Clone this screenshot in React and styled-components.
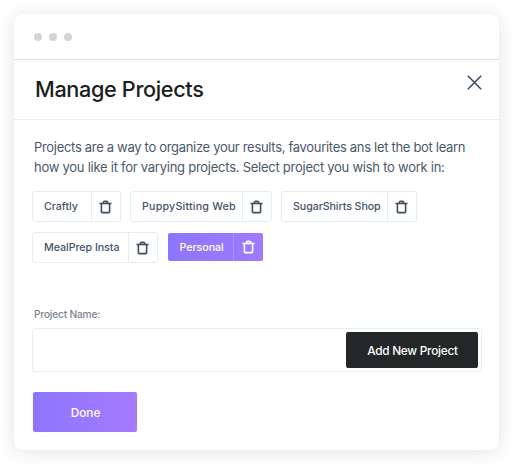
import React from "react";
import styled, { createGlobalStyle } from "styled-components";

const GlobalStyle = createGlobalStyle`
  *, *::before, *::after { box-sizing: border-box; }
  body {
    margin: 0;
    background: #fff;
    font-family: Inter, "Liberation Sans", sans-serif;
    overflow: hidden;
  }
  h1, p { margin: 0; }
  button { font: inherit; border: 0; padding: 0; margin: 0; background: none; }
`;

const Window = styled.main`
  width: 485px;
  height: 436px;
  margin: 14px;
  border-radius: 9px;
  background: #fff;
  box-shadow: 0 2px 19px rgba(0, 0, 0, 0.11);
`;

const TitleBar = styled.div`
  display: flex;
  align-items: center;
  gap: 7px;
  height: 46px;
  padding-left: 20px;
  border-bottom: 1px solid #dfdfe9;
`;

const Dot = styled.span`
  width: 8px;
  height: 8px;
  border-radius: 50%;
  background: #d4d4d4;
`;

const Header = styled.header`
  display: flex;
  justify-content: space-between;
  height: 60px;
  padding: 15px 17px 0 21px;
  border-bottom: 1px solid #e2eeee;
`;

const Title = styled.h1`
  font-size: 21.7px;
  line-height: 28px;
  font-weight: 500;
  letter-spacing: ${(p) => p.$track}px;
  color: #1b1e20;
  white-space: nowrap;
`;

const CloseButton = styled.button`
  width: 15px;
  height: 15px;
  display: flex;
`;

const Body = styled.section`
  padding: 17px 17px 0 18px;
`;

const Intro = styled.p`
  padding-left: 2px;
  font-size: 13px;
  line-height: 20px;
  color: #4b586a;
  white-space: nowrap;
`;

const Line = styled.span`
  display: block;
  letter-spacing: ${(p) => p.$track}px;
`;

const ChipList = styled.div`
  display: flex;
  flex-wrap: wrap;
  align-items: flex-start;
  gap: 10px 9px;
  margin-top: 14px;
`;

const Chip = styled.div`
  display: flex;
  width: ${(p) => p.$width}px;
  height: 31px;
  border: 1px solid #e2eef4;
  border-radius: 3px;
  color: #46536a;

  ${(p) =>
    p.$active &&
    `
    height: 28px;
    margin: 1px 0 0 1px;
    border: 0;
    border-radius: 2px;
    color: #fff;
    background: linear-gradient(90deg, #8c76fd, #a079fe);
  `}
`;

const ChipLabel = styled.span`
  flex: 1;
  padding-left: ${(p) => (p.$active ? 11.5 : 11)}px;
  font-size: 10.7px;
  line-height: ${(p) => (p.$active ? 29 : 30)}px;
  font-weight: 500;
  letter-spacing: ${(p) => p.$track}px;
  white-space: nowrap;
`;

const ChipDelete = styled.button`
  display: flex;
  align-items: center;
  justify-content: center;
  width: ${(p) => (p.$active ? 30 : 29)}px;
  padding-right: 1px;
  border-left: 1px solid ${(p) => (p.$active ? "#ad91fe" : "#e2eef4")};
  color: ${(p) => (p.$active ? "#fff" : "#414e60")};
`;

const FieldLabel = styled.label`
  display: block;
  margin: 43px 0 0 2px;
  font-size: 10.2px;
  line-height: 16px;
  font-weight: 500;
  letter-spacing: ${(p) => p.$track}px;
  color: #7b8592;
`;

const Field = styled.div`
  display: flex;
  height: 44px;
  width: 450px;
  margin-top: 6px;
  padding: 3px 3px 3px 0;
  border: 1px solid #e2eff7;
  border-radius: 3px;
`;

const Input = styled.input`
  flex: 1;
  min-width: 0;
  padding: 0 12px;
  border: 0;
  outline: 0;
  background: transparent;
  font: inherit;
`;

const Button = styled.button`
  width: ${(p) => p.$width}px;
  height: ${(p) => p.$height}px;
  padding: 1px 0 0 1px;
  border-radius: 2px;
  font-size: 11.8px;
  font-weight: 500;
  letter-spacing: ${(p) => p.$track}px;
  color: #fff;
  background: ${(p) => (p.$primary ? "linear-gradient(90deg, #8c76fd, #a57afe)" : "#232727")};
`;

const Footer = styled.footer`
  display: flex;
  padding: 20px 0 0 1px;
`;

const TrashIcon = () => (
  <svg width="13" height="14" viewBox="0 0 13 14" fill="none" stroke="currentColor">
    <path d="M.5 3.5h12" strokeWidth="1.6" />
    <path d="M4.3 3.4c0-1.4.5-2 1.3-2h1.8c.8 0 1.3.6 1.3 2" strokeWidth="1.6" />
    <path d="M2.4 3.7v8c0 .6.3.9.9.9h6.4c.6 0 .9-.3.9-.9v-8" strokeWidth="1.6" />
  </svg>
);

const projects = [
  { name: "Craftly", width: 89, track: -0.05 },
  { name: "PuppySitting Web", width: 142, track: 0.2 },
  { name: "SugarShirts Shop", width: 136, track: -0.09 },
  { name: "MealPrep Insta", width: 126, track: -0.06 },
  { name: "Personal", width: 95, track: -0.05 },
].map((project) => ({ ...project, active: project.name === "Personal" }));

export default function App() {
  return (
    <>
      <GlobalStyle />
      <Window>
        <TitleBar>
          <Dot />
          <Dot />
          <Dot />
        </TitleBar>
        <Header>
          <Title $track={-0.37}>Manage Projects</Title>
          <CloseButton aria-label="Close">
            <svg width="15" height="15" viewBox="0 0 15 15" stroke="#34435a" strokeWidth="1.4">
              <path d="M.8.8l13.4 13.4M14.2.8L.8 14.2" />
            </svg>
          </CloseButton>
        </Header>
        <Body>
          <Intro>
            <Line $track={-0.31}>Projects are a way to organize your results, favourites ans let the bot learn</Line>
            <Line $track={-0.255}>how you like it for varying projects. Select project you wish to work in:</Line>
          </Intro>
          <ChipList>
            {projects.map(({ name, width, track, active }) => (
              <Chip key={name} $width={width} $active={active}>
                <ChipLabel $track={track} $active={active}>{name}</ChipLabel>
                <ChipDelete $active={active} aria-label={`Delete ${name}`}>
                  <TrashIcon />
                </ChipDelete>
              </Chip>
            ))}
          </ChipList>
          <FieldLabel htmlFor="project-name" $track={-0.2}>Project Name:</FieldLabel>
          <Field>
            <Input id="project-name" />
            <Button $width={132} $height={36} $track={-0.24}>Add New Project</Button>
          </Field>
          <Footer>
            <Button $primary $width={104} $height={40} $track={0}>Done</Button>
          </Footer>
        </Body>
      </Window>
    </>
  );
}
